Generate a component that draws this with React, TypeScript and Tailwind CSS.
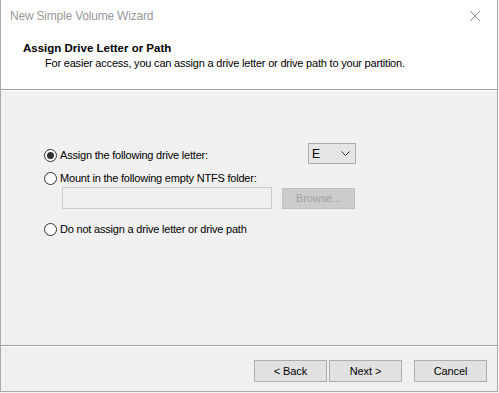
import React from 'react';

const font = { fontFamily: '"Segoe UI", "Liberation Sans", Arial, sans-serif' };

const Radio: React.FC<{ checked?: boolean; label: string }> = ({ checked, label }) => (
  <div className="flex items-center h-[16px]">
    <span className="w-[13px] h-[13px] rounded-full border border-[#333333] bg-white flex items-center justify-center">
      {checked && <span className="w-[7px] h-[7px] rounded-full bg-[#333333]" />}
    </span>
    <span className="ml-[3px] text-[11px] tracking-[-0.2px] text-black">{label}</span>
  </div>
);

const WizButton: React.FC<{ label: string; className?: string }> = ({ label, className }) => (
  <div
    className={`w-[73px] h-[22px] bg-[#e1e1e1] border border-[#adadad] flex items-center justify-center text-[11px] tracking-[-0.1px] text-black ${className ?? ''}`}
  >
    {label}
  </div>
);

export default function App() {
  return (
    <div className="w-[499px] h-[393px] bg-[#f3f3f3] overflow-hidden" style={font}>
      <div className="w-[498px] h-[392px] border-x border-b border-[#aaaaaa] flex flex-col bg-[#f0f0f0]">
        {/* title bar */}
        <div className="h-[31px] bg-white flex items-center justify-between pl-[9px] pr-[8px]">
          <span className="text-[12px] tracking-[-0.2px] text-[#999999]">New Simple Volume Wizard</span>
          <svg width="24" height="24" viewBox="0 0 24 24" className="mr-[2px]">
            <path d="M7 7L17 17M17 7L7 17" stroke="#8a8a8a" strokeWidth="1" />
          </svg>
        </div>

        {/* header */}
        <div className="h-[58px] bg-white pl-[22px] pt-[9px]">
          <div className="text-[11.5px] font-bold leading-[16px] text-black">Assign Drive Letter or Path</div>
          <div className="text-[11px] tracking-[-0.2px] leading-[16px] text-black pl-[22px] -mt-[1px]">
            For easier access, you can assign a drive letter or drive path to your partition.
          </div>
        </div>
        <div className="h-[1px] bg-[#a0a0a0]" />
        <div className="h-[1px] bg-white" />

        {/* body */}
        <div className="h-[254px] pl-[43px] pt-[52px]">
          <div className="flex items-start h-[21px]">
            <div className="w-[264px] mt-[4px]">
              <Radio checked label="Assign the following drive letter:" />
            </div>
            <div className="w-[48px] h-[21px] bg-[#e5e5e5] border border-[#adadad] flex items-center justify-between pl-[3px] pr-[5px] text-[12px] text-black">
              <span>E</span>
              <svg width="9" height="6" viewBox="0 0 9 6">
                <path d="M0.5 0.5L4.5 4.5L8.5 0.5" stroke="#333333" strokeWidth="1" fill="none" />
              </svg>
            </div>
          </div>
          <div className="mt-[6px]">
            <Radio label="Mount in the following empty NTFS folder:" />
          </div>
          <div className="flex mt-[1px] ml-[18px]">
            <div className="w-[210px] h-[22px] bg-[#f0f0f0] border border-[#cccccc]" />
            <div className="ml-[10px] mt-[1px] w-[73px] h-[21px] bg-[#cccccc] border border-[#bfbfbf] flex items-center justify-center text-[11px] tracking-[-0.1px] text-[#a0a0a0]">
              Browse...
            </div>
          </div>
          <div className="mt-[12px]">
            <Radio label="Do not assign a drive letter or drive path" />
          </div>
        </div>

        <div className="h-[1px] bg-[#a0a0a0]" />
        <div className="h-[1px] bg-white" />

        {/* footer */}
        <div className="flex-1 flex justify-end pt-[13px] pr-[10px]">
          <WizButton label="< Back" />
          <WizButton label="Next >" className="ml-[2px]" />
          <WizButton label="Cancel" className="ml-[12px]" />
        </div>
      </div>
    </div>
  );
}
